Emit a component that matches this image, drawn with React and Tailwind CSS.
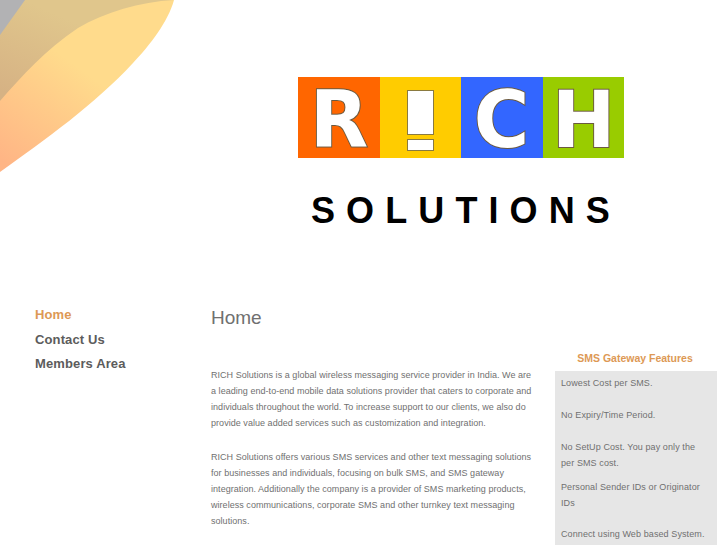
import React from 'react';

const tiles = [
  { letter: 'R', color: 'bg-[#ff6600]' },
  { letter: '!', color: 'bg-[#ffcc00]' },
  { letter: 'C', color: 'bg-[#3366ff]' },
  { letter: 'H', color: 'bg-[#99cc00]' },
];

const features = [
  { lines: ['Lowest Cost per SMS.'], cls: 'mb-[16px]' },
  { lines: ['No Expiry/Time Period.'], cls: 'mb-[16px]' },
  { lines: ['No SetUp Cost. You pay only the', 'per SMS cost.'], cls: 'mb-[8px]' },
  { lines: ['Personal Sender IDs or Originator', 'IDs'], cls: 'mb-[15px]' },
  { lines: ['Connect using Web based System.'], cls: '' },
];

const Swoosh = () => (
  <svg className="absolute left-0 top-0" width="175" height="175" viewBox="0 0 175 175">
    <defs>
      <linearGradient id="front" x1="0.62" y1="0.3" x2="0.1" y2="1">
        <stop offset="0.2" stopColor="#ffdb8c" />
        <stop offset="1" stopColor="#ffb585" />
      </linearGradient>
      <linearGradient id="back" x1="0.7" y1="0" x2="0" y2="0.9">
        <stop offset="0.3" stopColor="#e0c68c" />
        <stop offset="1" stopColor="#d6b284" />
      </linearGradient>
    </defs>
    <path d="M0 0H174C168 22 150 45 133 63C95 104 45 140 0 172Z" fill="url(#front)" />
    <path d="M0 0H174C140 2 105 12 78 28C45 50 22 76 0 101Z" fill="url(#back)" />
    <path d="M0 0H25L0 35Z" fill="#b2b2b4" />
  </svg>
);

const App = () => {
  return (
    <div className="relative h-[545px] w-[727px] overflow-hidden bg-white font-['Liberation_Sans',Arial,sans-serif]">
      <Swoosh />

      <header className="h-[298px] pl-[298px] pt-[77px]">
        <div className="flex h-[81px] w-[326px]">
          {tiles.map((tile) => (
            <div
              key={tile.letter}
              className={`flex flex-1 items-center justify-center ${tile.color} pt-[5px] font-['DejaVu_Sans',sans-serif] text-[78px] font-bold leading-none text-white [-webkit-text-stroke:2px_#6b5a40] [paint-order:stroke_fill]`}
            >
              {tile.letter === '!' ? (
                <div className="flex w-[27px] flex-col gap-[4px]">
                  <div className="h-[45px] border border-[#8a7a40] bg-white" />
                  <div className="h-[12px] border border-[#8a7a40] bg-white" />
                </div>
              ) : (
                <span className="inline-block scale-x-[0.97]">{tile.letter}</span>
              )}
            </div>
          ))}
        </div>
        <div className="mt-[31px] ml-[13px] whitespace-nowrap text-[36px] font-bold leading-[44px] tracking-[11.1px] text-black">
          SOLUTIONS
        </div>
      </header>

      <div className="flex pl-[35px]">
        <nav className="w-[176px] pt-[5px] text-[13px] font-bold leading-[24.5px] tracking-[0.12px] text-[#5c5c5c]">
          <div className="text-[#dd9955]">Home</div>
          <div>Contact Us</div>
          <div>Members Area</div>
        </nav>

        <main className="w-[344px] text-[#707070]">
          <h1 className="mt-[8px] text-[19px] font-normal leading-[24px]">Home</h1>
          <div className="mt-[37px] whitespace-nowrap text-[9px] leading-[16px] tracking-[0.04px]">
            <p>
              RICH Solutions is a global wireless messaging service provider in India. We are<br />
              a leading end-to-end mobile data solutions provider that caters to corporate and<br />
              individuals throughout the world. To increase support to our clients, we also do<br />
              provide value added services such as customization and integration.
            </p>
            <p className="mt-[18px]">
              RICH Solutions offers various SMS services and other text messaging solutions<br />
              for businesses and individuals, focusing on bulk SMS, and SMS gateway<br />
              integration. Additionally the company is a provider of SMS marketing products,<br />
              wireless communications, corporate SMS and other turnkey text messaging<br />
              solutions.
            </p>
          </div>
        </main>

        <aside className="w-[162px] pt-[53px]">
          <h2 className="pr-[2px] text-center text-[10.5px] font-bold leading-[14px] text-[#dd9955]">SMS Gateway Features</h2>
          <div className="mt-[6px] h-[200px] bg-[#e6e6e6] px-[6px] pt-[4px] text-[9px] leading-[16px] tracking-[0.1px] text-[#707070]">
            {features.map((item) => (
              <p key={item.lines[0]} className={item.cls}>
                {item.lines.map((line) => (
                  <span key={line} className="block whitespace-nowrap">{line}</span>
                ))}
              </p>
            ))}
          </div>
        </aside>
      </div>
    </div>
  );
};

export default App;
